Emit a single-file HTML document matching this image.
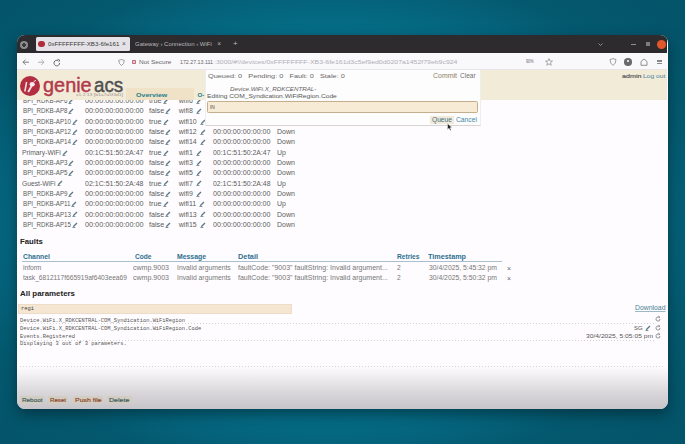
<!DOCTYPE html>
<html><head><meta charset="utf-8">
<style>
*{margin:0;padding:0;box-sizing:border-box}
html,body{width:685px;height:444px;overflow:hidden}
body{position:relative;font-family:"Liberation Sans",sans-serif;
background:radial-gradient(ellipse closest-side at 48% 50%,#06768f 0%,#056c86 88%,#04596f 115%,#04546a 141%);}
.a{position:absolute;white-space:nowrap;line-height:1}
#win{position:absolute;left:17px;top:35px;width:650.6px;height:373.6px;border-radius:8px 8px 8px 8px;overflow:hidden;background:#fefcfe;box-shadow:0 5px 14px rgba(0,25,35,.55)}
#fade{position:absolute;left:0;top:331px;width:651px;height:43px;background:linear-gradient(180deg,rgba(196,194,198,0) 0%,rgba(196,194,198,.3) 30%,rgba(196,194,198,.65) 62%,rgba(194,192,196,.92) 100%)}
</style></head><body>
<div id="win">
<div class="a" style="left:5.5px;top:62.13px;font-size:7px;color:#5c5c5c;transform:scaleX(0.888);transform-origin:0 0;">BPI_RDKB-AP6</div>
<svg class="a" width="6" height="6" viewBox="0 0 6 6" style="left:51.27px;top:63.0px;overflow:visible"><path d="M1.2 4.8 L5 1" stroke="#5d7a84" stroke-width="1.3" fill="none"/><path d="M0.4 5.5 H3.4" stroke="#5d7a84" stroke-width="0.8"/></svg>
<div class="a" style="left:68px;top:62.13px;font-size:7px;color:#5c5c5c;transform:scaleX(1.037);transform-origin:0 0;">00:00:00:00:00:00</div>
<div class="a" style="left:132px;top:62.13px;font-size:7px;color:#5c5c5c;transform:scaleX(1.030);transform-origin:0 0;">true</div>
<svg class="a" width="6" height="6" viewBox="0 0 6 6" style="left:145.62px;top:63.0px;overflow:visible"><path d="M1.2 4.8 L5 1" stroke="#5d7a84" stroke-width="1.3" fill="none"/><path d="M0.4 5.5 H3.4" stroke="#5d7a84" stroke-width="0.8"/></svg>
<div class="a" style="left:161.8px;top:62.13px;font-size:7px;color:#5c5c5c;">wifi6</div>
<svg class="a" width="6" height="6" viewBox="0 0 6 6" style="left:178.6px;top:63.0px;overflow:visible"><path d="M1.2 4.8 L5 1" stroke="#5d7a84" stroke-width="1.3" fill="none"/><path d="M0.4 5.5 H3.4" stroke="#5d7a84" stroke-width="0.8"/></svg>
<div class="a" style="left:196px;top:62.13px;font-size:7px;color:#5c5c5c;transform:scaleX(1.019);transform-origin:0 0;">00:00:00:00:00:00</div>
<div class="a" style="left:260px;top:62.13px;font-size:7px;color:#5c5c5c;">Down</div>
<div class="a" style="left:5.5px;top:72.44px;font-size:7px;color:#5c5c5c;transform:scaleX(0.888);transform-origin:0 0;">BPI_RDKB-AP8</div>
<svg class="a" width="6" height="6" viewBox="0 0 6 6" style="left:51.27px;top:73.31px;overflow:visible"><path d="M1.2 4.8 L5 1" stroke="#5d7a84" stroke-width="1.3" fill="none"/><path d="M0.4 5.5 H3.4" stroke="#5d7a84" stroke-width="0.8"/></svg>
<div class="a" style="left:68px;top:72.44px;font-size:7px;color:#5c5c5c;transform:scaleX(1.037);transform-origin:0 0;">00:00:00:00:00:00</div>
<div class="a" style="left:132px;top:72.44px;font-size:7px;color:#5c5c5c;transform:scaleX(1.030);transform-origin:0 0;">false</div>
<svg class="a" width="6" height="6" viewBox="0 0 6 6" style="left:148.43px;top:73.31px;overflow:visible"><path d="M1.2 4.8 L5 1" stroke="#5d7a84" stroke-width="1.3" fill="none"/><path d="M0.4 5.5 H3.4" stroke="#5d7a84" stroke-width="0.8"/></svg>
<div class="a" style="left:161.8px;top:72.44px;font-size:7px;color:#5c5c5c;">wifi8</div>
<svg class="a" width="6" height="6" viewBox="0 0 6 6" style="left:178.6px;top:73.31px;overflow:visible"><path d="M1.2 4.8 L5 1" stroke="#5d7a84" stroke-width="1.3" fill="none"/><path d="M0.4 5.5 H3.4" stroke="#5d7a84" stroke-width="0.8"/></svg>
<div class="a" style="left:196px;top:72.44px;font-size:7px;color:#5c5c5c;transform:scaleX(1.019);transform-origin:0 0;">00:00:00:00:00:00</div>
<div class="a" style="left:260px;top:72.44px;font-size:7px;color:#5c5c5c;">Down</div>
<div class="a" style="left:5.5px;top:82.75px;font-size:7px;color:#5c5c5c;transform:scaleX(0.888);transform-origin:0 0;">BPI_RDKB-AP10</div>
<svg class="a" width="6" height="6" viewBox="0 0 6 6" style="left:54.72px;top:83.62px;overflow:visible"><path d="M1.2 4.8 L5 1" stroke="#5d7a84" stroke-width="1.3" fill="none"/><path d="M0.4 5.5 H3.4" stroke="#5d7a84" stroke-width="0.8"/></svg>
<div class="a" style="left:68px;top:82.75px;font-size:7px;color:#5c5c5c;transform:scaleX(1.037);transform-origin:0 0;">00:00:00:00:00:00</div>
<div class="a" style="left:132px;top:82.75px;font-size:7px;color:#5c5c5c;transform:scaleX(1.030);transform-origin:0 0;">true</div>
<svg class="a" width="6" height="6" viewBox="0 0 6 6" style="left:145.62px;top:83.62px;overflow:visible"><path d="M1.2 4.8 L5 1" stroke="#5d7a84" stroke-width="1.3" fill="none"/><path d="M0.4 5.5 H3.4" stroke="#5d7a84" stroke-width="0.8"/></svg>
<div class="a" style="left:161.8px;top:82.75px;font-size:7px;color:#5c5c5c;">wifi10</div>
<svg class="a" width="6" height="6" viewBox="0 0 6 6" style="left:182.5px;top:83.62px;overflow:visible"><path d="M1.2 4.8 L5 1" stroke="#5d7a84" stroke-width="1.3" fill="none"/><path d="M0.4 5.5 H3.4" stroke="#5d7a84" stroke-width="0.8"/></svg>
<div class="a" style="left:196px;top:82.75px;font-size:7px;color:#5c5c5c;transform:scaleX(1.019);transform-origin:0 0;">00:00:00:00:00:00</div>
<div class="a" style="left:260px;top:82.75px;font-size:7px;color:#5c5c5c;">Down</div>
<div class="a" style="left:5.5px;top:93.06px;font-size:7px;color:#5c5c5c;transform:scaleX(0.888);transform-origin:0 0;">BPI_RDKB-AP12</div>
<svg class="a" width="6" height="6" viewBox="0 0 6 6" style="left:54.72px;top:93.93px;overflow:visible"><path d="M1.2 4.8 L5 1" stroke="#5d7a84" stroke-width="1.3" fill="none"/><path d="M0.4 5.5 H3.4" stroke="#5d7a84" stroke-width="0.8"/></svg>
<div class="a" style="left:68px;top:93.06px;font-size:7px;color:#5c5c5c;transform:scaleX(1.037);transform-origin:0 0;">00:00:00:00:00:00</div>
<div class="a" style="left:132px;top:93.06px;font-size:7px;color:#5c5c5c;transform:scaleX(1.030);transform-origin:0 0;">false</div>
<svg class="a" width="6" height="6" viewBox="0 0 6 6" style="left:148.43px;top:93.93px;overflow:visible"><path d="M1.2 4.8 L5 1" stroke="#5d7a84" stroke-width="1.3" fill="none"/><path d="M0.4 5.5 H3.4" stroke="#5d7a84" stroke-width="0.8"/></svg>
<div class="a" style="left:161.8px;top:93.06px;font-size:7px;color:#5c5c5c;">wifi12</div>
<svg class="a" width="6" height="6" viewBox="0 0 6 6" style="left:182.5px;top:93.93px;overflow:visible"><path d="M1.2 4.8 L5 1" stroke="#5d7a84" stroke-width="1.3" fill="none"/><path d="M0.4 5.5 H3.4" stroke="#5d7a84" stroke-width="0.8"/></svg>
<div class="a" style="left:196px;top:93.06px;font-size:7px;color:#5c5c5c;transform:scaleX(1.019);transform-origin:0 0;">00:00:00:00:00:00</div>
<div class="a" style="left:260px;top:93.06px;font-size:7px;color:#5c5c5c;">Down</div>
<div class="a" style="left:5.5px;top:103.37px;font-size:7px;color:#5c5c5c;transform:scaleX(0.888);transform-origin:0 0;">BPI_RDKB-AP14</div>
<svg class="a" width="6" height="6" viewBox="0 0 6 6" style="left:54.72px;top:104.24px;overflow:visible"><path d="M1.2 4.8 L5 1" stroke="#5d7a84" stroke-width="1.3" fill="none"/><path d="M0.4 5.5 H3.4" stroke="#5d7a84" stroke-width="0.8"/></svg>
<div class="a" style="left:68px;top:103.37px;font-size:7px;color:#5c5c5c;transform:scaleX(1.037);transform-origin:0 0;">00:00:00:00:00:00</div>
<div class="a" style="left:132px;top:103.37px;font-size:7px;color:#5c5c5c;transform:scaleX(1.030);transform-origin:0 0;">false</div>
<svg class="a" width="6" height="6" viewBox="0 0 6 6" style="left:148.43px;top:104.24px;overflow:visible"><path d="M1.2 4.8 L5 1" stroke="#5d7a84" stroke-width="1.3" fill="none"/><path d="M0.4 5.5 H3.4" stroke="#5d7a84" stroke-width="0.8"/></svg>
<div class="a" style="left:161.8px;top:103.37px;font-size:7px;color:#5c5c5c;">wifi14</div>
<svg class="a" width="6" height="6" viewBox="0 0 6 6" style="left:182.5px;top:104.24px;overflow:visible"><path d="M1.2 4.8 L5 1" stroke="#5d7a84" stroke-width="1.3" fill="none"/><path d="M0.4 5.5 H3.4" stroke="#5d7a84" stroke-width="0.8"/></svg>
<div class="a" style="left:196px;top:103.37px;font-size:7px;color:#5c5c5c;transform:scaleX(1.019);transform-origin:0 0;">00:00:00:00:00:00</div>
<div class="a" style="left:260px;top:103.37px;font-size:7px;color:#5c5c5c;">Down</div>
<div class="a" style="left:5.0px;top:113.68px;font-size:7px;color:#5c5c5c;transform:scaleX(0.960);transform-origin:0 0;">Primary-WiFi</div>
<svg class="a" width="6" height="6" viewBox="0 0 6 6" style="left:45.02px;top:114.55px;overflow:visible"><path d="M1.2 4.8 L5 1" stroke="#5d7a84" stroke-width="1.3" fill="none"/><path d="M0.4 5.5 H3.4" stroke="#5d7a84" stroke-width="0.8"/></svg>
<div class="a" style="left:68px;top:113.68px;font-size:7px;color:#5c5c5c;transform:scaleX(1.002);transform-origin:0 0;">00:1C:51:50:2A:47</div>
<div class="a" style="left:132px;top:113.68px;font-size:7px;color:#5c5c5c;transform:scaleX(1.030);transform-origin:0 0;">true</div>
<svg class="a" width="6" height="6" viewBox="0 0 6 6" style="left:145.62px;top:114.55px;overflow:visible"><path d="M1.2 4.8 L5 1" stroke="#5d7a84" stroke-width="1.3" fill="none"/><path d="M0.4 5.5 H3.4" stroke="#5d7a84" stroke-width="0.8"/></svg>
<div class="a" style="left:161.8px;top:113.68px;font-size:7px;color:#5c5c5c;">wifi1</div>
<svg class="a" width="6" height="6" viewBox="0 0 6 6" style="left:178.6px;top:114.55px;overflow:visible"><path d="M1.2 4.8 L5 1" stroke="#5d7a84" stroke-width="1.3" fill="none"/><path d="M0.4 5.5 H3.4" stroke="#5d7a84" stroke-width="0.8"/></svg>
<div class="a" style="left:196px;top:113.68px;font-size:7px;color:#5c5c5c;transform:scaleX(0.985);transform-origin:0 0;">00:1C:51:50:2A:47</div>
<div class="a" style="left:260px;top:113.68px;font-size:7px;color:#5c5c5c;">Up</div>
<div class="a" style="left:5.5px;top:123.99px;font-size:7px;color:#5c5c5c;transform:scaleX(0.888);transform-origin:0 0;">BPI_RDKB-AP3</div>
<svg class="a" width="6" height="6" viewBox="0 0 6 6" style="left:51.27px;top:124.86px;overflow:visible"><path d="M1.2 4.8 L5 1" stroke="#5d7a84" stroke-width="1.3" fill="none"/><path d="M0.4 5.5 H3.4" stroke="#5d7a84" stroke-width="0.8"/></svg>
<div class="a" style="left:68px;top:123.99px;font-size:7px;color:#5c5c5c;transform:scaleX(1.037);transform-origin:0 0;">00:00:00:00:00:00</div>
<div class="a" style="left:132px;top:123.99px;font-size:7px;color:#5c5c5c;transform:scaleX(1.030);transform-origin:0 0;">false</div>
<svg class="a" width="6" height="6" viewBox="0 0 6 6" style="left:148.43px;top:124.86px;overflow:visible"><path d="M1.2 4.8 L5 1" stroke="#5d7a84" stroke-width="1.3" fill="none"/><path d="M0.4 5.5 H3.4" stroke="#5d7a84" stroke-width="0.8"/></svg>
<div class="a" style="left:161.8px;top:123.99px;font-size:7px;color:#5c5c5c;">wifi3</div>
<svg class="a" width="6" height="6" viewBox="0 0 6 6" style="left:178.6px;top:124.86px;overflow:visible"><path d="M1.2 4.8 L5 1" stroke="#5d7a84" stroke-width="1.3" fill="none"/><path d="M0.4 5.5 H3.4" stroke="#5d7a84" stroke-width="0.8"/></svg>
<div class="a" style="left:196px;top:123.99px;font-size:7px;color:#5c5c5c;transform:scaleX(1.019);transform-origin:0 0;">00:00:00:00:00:00</div>
<div class="a" style="left:260px;top:123.99px;font-size:7px;color:#5c5c5c;">Down</div>
<div class="a" style="left:5.5px;top:134.3px;font-size:7px;color:#5c5c5c;transform:scaleX(0.888);transform-origin:0 0;">BPI_RDKB-AP5</div>
<svg class="a" width="6" height="6" viewBox="0 0 6 6" style="left:51.27px;top:135.17px;overflow:visible"><path d="M1.2 4.8 L5 1" stroke="#5d7a84" stroke-width="1.3" fill="none"/><path d="M0.4 5.5 H3.4" stroke="#5d7a84" stroke-width="0.8"/></svg>
<div class="a" style="left:68px;top:134.3px;font-size:7px;color:#5c5c5c;transform:scaleX(1.037);transform-origin:0 0;">00:00:00:00:00:00</div>
<div class="a" style="left:132px;top:134.3px;font-size:7px;color:#5c5c5c;transform:scaleX(1.030);transform-origin:0 0;">false</div>
<svg class="a" width="6" height="6" viewBox="0 0 6 6" style="left:148.43px;top:135.17px;overflow:visible"><path d="M1.2 4.8 L5 1" stroke="#5d7a84" stroke-width="1.3" fill="none"/><path d="M0.4 5.5 H3.4" stroke="#5d7a84" stroke-width="0.8"/></svg>
<div class="a" style="left:161.8px;top:134.3px;font-size:7px;color:#5c5c5c;">wifi5</div>
<svg class="a" width="6" height="6" viewBox="0 0 6 6" style="left:178.6px;top:135.17px;overflow:visible"><path d="M1.2 4.8 L5 1" stroke="#5d7a84" stroke-width="1.3" fill="none"/><path d="M0.4 5.5 H3.4" stroke="#5d7a84" stroke-width="0.8"/></svg>
<div class="a" style="left:196px;top:134.3px;font-size:7px;color:#5c5c5c;transform:scaleX(1.019);transform-origin:0 0;">00:00:00:00:00:00</div>
<div class="a" style="left:260px;top:134.3px;font-size:7px;color:#5c5c5c;">Down</div>
<div class="a" style="left:5.0px;top:144.61px;font-size:7px;color:#5c5c5c;transform:scaleX(0.960);transform-origin:0 0;">Guest-WiFi</div>
<svg class="a" width="6" height="6" viewBox="0 0 6 6" style="left:39.8px;top:145.48px;overflow:visible"><path d="M1.2 4.8 L5 1" stroke="#5d7a84" stroke-width="1.3" fill="none"/><path d="M0.4 5.5 H3.4" stroke="#5d7a84" stroke-width="0.8"/></svg>
<div class="a" style="left:68px;top:144.61px;font-size:7px;color:#5c5c5c;transform:scaleX(1.002);transform-origin:0 0;">02:1C:51:50:2A:48</div>
<div class="a" style="left:132px;top:144.61px;font-size:7px;color:#5c5c5c;transform:scaleX(1.030);transform-origin:0 0;">true</div>
<svg class="a" width="6" height="6" viewBox="0 0 6 6" style="left:145.62px;top:145.48px;overflow:visible"><path d="M1.2 4.8 L5 1" stroke="#5d7a84" stroke-width="1.3" fill="none"/><path d="M0.4 5.5 H3.4" stroke="#5d7a84" stroke-width="0.8"/></svg>
<div class="a" style="left:161.8px;top:144.61px;font-size:7px;color:#5c5c5c;">wifi7</div>
<svg class="a" width="6" height="6" viewBox="0 0 6 6" style="left:178.6px;top:145.48px;overflow:visible"><path d="M1.2 4.8 L5 1" stroke="#5d7a84" stroke-width="1.3" fill="none"/><path d="M0.4 5.5 H3.4" stroke="#5d7a84" stroke-width="0.8"/></svg>
<div class="a" style="left:196px;top:144.61px;font-size:7px;color:#5c5c5c;transform:scaleX(0.985);transform-origin:0 0;">02:1C:51:50:2A:48</div>
<div class="a" style="left:260px;top:144.61px;font-size:7px;color:#5c5c5c;">Up</div>
<div class="a" style="left:5.5px;top:154.92px;font-size:7px;color:#5c5c5c;transform:scaleX(0.888);transform-origin:0 0;">BPI_RDKB-AP9</div>
<svg class="a" width="6" height="6" viewBox="0 0 6 6" style="left:51.27px;top:155.79px;overflow:visible"><path d="M1.2 4.8 L5 1" stroke="#5d7a84" stroke-width="1.3" fill="none"/><path d="M0.4 5.5 H3.4" stroke="#5d7a84" stroke-width="0.8"/></svg>
<div class="a" style="left:68px;top:154.92px;font-size:7px;color:#5c5c5c;transform:scaleX(1.037);transform-origin:0 0;">00:00:00:00:00:00</div>
<div class="a" style="left:132px;top:154.92px;font-size:7px;color:#5c5c5c;transform:scaleX(1.030);transform-origin:0 0;">false</div>
<svg class="a" width="6" height="6" viewBox="0 0 6 6" style="left:148.43px;top:155.79px;overflow:visible"><path d="M1.2 4.8 L5 1" stroke="#5d7a84" stroke-width="1.3" fill="none"/><path d="M0.4 5.5 H3.4" stroke="#5d7a84" stroke-width="0.8"/></svg>
<div class="a" style="left:161.8px;top:154.92px;font-size:7px;color:#5c5c5c;">wifi9</div>
<svg class="a" width="6" height="6" viewBox="0 0 6 6" style="left:178.6px;top:155.79px;overflow:visible"><path d="M1.2 4.8 L5 1" stroke="#5d7a84" stroke-width="1.3" fill="none"/><path d="M0.4 5.5 H3.4" stroke="#5d7a84" stroke-width="0.8"/></svg>
<div class="a" style="left:196px;top:154.92px;font-size:7px;color:#5c5c5c;transform:scaleX(1.019);transform-origin:0 0;">00:00:00:00:00:00</div>
<div class="a" style="left:260px;top:154.92px;font-size:7px;color:#5c5c5c;">Down</div>
<div class="a" style="left:5.5px;top:165.23px;font-size:7px;color:#5c5c5c;transform:scaleX(0.888);transform-origin:0 0;">BPI_RDKB-AP11</div>
<svg class="a" width="6" height="6" viewBox="0 0 6 6" style="left:54.26px;top:166.1px;overflow:visible"><path d="M1.2 4.8 L5 1" stroke="#5d7a84" stroke-width="1.3" fill="none"/><path d="M0.4 5.5 H3.4" stroke="#5d7a84" stroke-width="0.8"/></svg>
<div class="a" style="left:68px;top:165.23px;font-size:7px;color:#5c5c5c;transform:scaleX(1.037);transform-origin:0 0;">00:00:00:00:00:00</div>
<div class="a" style="left:132px;top:165.23px;font-size:7px;color:#5c5c5c;transform:scaleX(1.030);transform-origin:0 0;">true</div>
<svg class="a" width="6" height="6" viewBox="0 0 6 6" style="left:145.62px;top:166.1px;overflow:visible"><path d="M1.2 4.8 L5 1" stroke="#5d7a84" stroke-width="1.3" fill="none"/><path d="M0.4 5.5 H3.4" stroke="#5d7a84" stroke-width="0.8"/></svg>
<div class="a" style="left:161.8px;top:165.23px;font-size:7px;color:#5c5c5c;">wifi11</div>
<svg class="a" width="6" height="6" viewBox="0 0 6 6" style="left:181.98px;top:166.1px;overflow:visible"><path d="M1.2 4.8 L5 1" stroke="#5d7a84" stroke-width="1.3" fill="none"/><path d="M0.4 5.5 H3.4" stroke="#5d7a84" stroke-width="0.8"/></svg>
<div class="a" style="left:196px;top:165.23px;font-size:7px;color:#5c5c5c;transform:scaleX(1.019);transform-origin:0 0;">00:00:00:00:00:00</div>
<div class="a" style="left:260px;top:165.23px;font-size:7px;color:#5c5c5c;">Up</div>
<div class="a" style="left:5.5px;top:175.54px;font-size:7px;color:#5c5c5c;transform:scaleX(0.888);transform-origin:0 0;">BPI_RDKB-AP13</div>
<svg class="a" width="6" height="6" viewBox="0 0 6 6" style="left:54.72px;top:176.41px;overflow:visible"><path d="M1.2 4.8 L5 1" stroke="#5d7a84" stroke-width="1.3" fill="none"/><path d="M0.4 5.5 H3.4" stroke="#5d7a84" stroke-width="0.8"/></svg>
<div class="a" style="left:68px;top:175.54px;font-size:7px;color:#5c5c5c;transform:scaleX(1.037);transform-origin:0 0;">00:00:00:00:00:00</div>
<div class="a" style="left:132px;top:175.54px;font-size:7px;color:#5c5c5c;transform:scaleX(1.030);transform-origin:0 0;">false</div>
<svg class="a" width="6" height="6" viewBox="0 0 6 6" style="left:148.43px;top:176.41px;overflow:visible"><path d="M1.2 4.8 L5 1" stroke="#5d7a84" stroke-width="1.3" fill="none"/><path d="M0.4 5.5 H3.4" stroke="#5d7a84" stroke-width="0.8"/></svg>
<div class="a" style="left:161.8px;top:175.54px;font-size:7px;color:#5c5c5c;">wifi13</div>
<svg class="a" width="6" height="6" viewBox="0 0 6 6" style="left:182.5px;top:176.41px;overflow:visible"><path d="M1.2 4.8 L5 1" stroke="#5d7a84" stroke-width="1.3" fill="none"/><path d="M0.4 5.5 H3.4" stroke="#5d7a84" stroke-width="0.8"/></svg>
<div class="a" style="left:196px;top:175.54px;font-size:7px;color:#5c5c5c;transform:scaleX(1.019);transform-origin:0 0;">00:00:00:00:00:00</div>
<div class="a" style="left:260px;top:175.54px;font-size:7px;color:#5c5c5c;">Down</div>
<div class="a" style="left:5.5px;top:185.85px;font-size:7px;color:#5c5c5c;transform:scaleX(0.888);transform-origin:0 0;">BPI_RDKB-AP15</div>
<svg class="a" width="6" height="6" viewBox="0 0 6 6" style="left:54.72px;top:186.72px;overflow:visible"><path d="M1.2 4.8 L5 1" stroke="#5d7a84" stroke-width="1.3" fill="none"/><path d="M0.4 5.5 H3.4" stroke="#5d7a84" stroke-width="0.8"/></svg>
<div class="a" style="left:68px;top:185.85px;font-size:7px;color:#5c5c5c;transform:scaleX(1.037);transform-origin:0 0;">00:00:00:00:00:00</div>
<div class="a" style="left:132px;top:185.85px;font-size:7px;color:#5c5c5c;transform:scaleX(1.030);transform-origin:0 0;">false</div>
<svg class="a" width="6" height="6" viewBox="0 0 6 6" style="left:148.43px;top:186.72px;overflow:visible"><path d="M1.2 4.8 L5 1" stroke="#5d7a84" stroke-width="1.3" fill="none"/><path d="M0.4 5.5 H3.4" stroke="#5d7a84" stroke-width="0.8"/></svg>
<div class="a" style="left:161.8px;top:185.85px;font-size:7px;color:#5c5c5c;">wifi15</div>
<svg class="a" width="6" height="6" viewBox="0 0 6 6" style="left:182.5px;top:186.72px;overflow:visible"><path d="M1.2 4.8 L5 1" stroke="#5d7a84" stroke-width="1.3" fill="none"/><path d="M0.4 5.5 H3.4" stroke="#5d7a84" stroke-width="0.8"/></svg>
<div class="a" style="left:196px;top:185.85px;font-size:7px;color:#5c5c5c;transform:scaleX(1.019);transform-origin:0 0;">00:00:00:00:00:00</div>
<div class="a" style="left:260px;top:185.85px;font-size:7px;color:#5c5c5c;">Down</div>
<div class="a" style="left:2.5px;top:202.54px;font-size:8px;color:#222;font-weight:bold;transform:scaleX(0.968);transform-origin:0 0;">Faults</div>
<div class="a" style="left:6px;top:219.06px;font-size:6.3px;color:#2e6f8e;font-weight:bold;transform:scaleX(1.086);transform-origin:0 0;">Channel</div>
<div class="a" style="left:117.5px;top:219.06px;font-size:6.3px;color:#2e6f8e;font-weight:bold;transform:scaleX(1.048);transform-origin:0 0;">Code</div>
<div class="a" style="left:159.5px;top:219.06px;font-size:6.3px;color:#2e6f8e;font-weight:bold;transform:scaleX(1.090);transform-origin:0 0;">Message</div>
<div class="a" style="left:221px;top:219.06px;font-size:6.3px;color:#2e6f8e;font-weight:bold;transform:scaleX(1.166);transform-origin:0 0;">Detail</div>
<div class="a" style="left:380.2px;top:219.06px;font-size:6.3px;color:#2e6f8e;font-weight:bold;transform:scaleX(1.053);transform-origin:0 0;">Retries</div>
<div class="a" style="left:410.8px;top:219.06px;font-size:6.3px;color:#2e6f8e;font-weight:bold;transform:scaleX(1.147);transform-origin:0 0;">Timestamp</div>
<div class="a" style="left:5px;top:226.3px;width:480px;height:1.0px;background:#a8c0ce;"></div>
<div class="a" style="left:6px;top:229.82px;font-size:6.6px;color:#777;">inform</div>
<div class="a" style="left:116.3px;top:229.82px;font-size:6.6px;color:#777;transform:scaleX(1.067);transform-origin:0 0;">cwmp.9003</div>
<div class="a" style="left:159.5px;top:229.82px;font-size:6.6px;color:#777;transform:scaleX(1.033);transform-origin:0 0;">Invalid arguments</div>
<div class="a" style="left:221px;top:229.82px;font-size:6.6px;color:#777;transform:scaleX(1.065);transform-origin:0 0;">faultCode: "9003" faultString: Invalid argument...</div>
<div class="a" style="left:380px;top:229.82px;font-size:6.6px;color:#777;">2</div>
<div class="a" style="left:411.6px;top:229.82px;font-size:6.6px;color:#777;transform:scaleX(1.030);transform-origin:0 0;">30/4/2025, 5:45:32 pm</div>
<div class="a" style="left:490px;top:229.63px;font-size:7px;color:#666;">×</div>
<div class="a" style="left:6px;top:240.02px;font-size:6.6px;color:#777;transform:scaleX(1.006);transform-origin:0 0;">task_6812117f665919af6403eea69</div>
<div class="a" style="left:116.3px;top:240.02px;font-size:6.6px;color:#777;transform:scaleX(1.067);transform-origin:0 0;">cwmp.9003</div>
<div class="a" style="left:159.5px;top:240.02px;font-size:6.6px;color:#777;transform:scaleX(1.033);transform-origin:0 0;">Invalid arguments</div>
<div class="a" style="left:221px;top:240.02px;font-size:6.6px;color:#777;transform:scaleX(1.065);transform-origin:0 0;">faultCode: "9003" faultString: Invalid argument...</div>
<div class="a" style="left:380px;top:240.02px;font-size:6.6px;color:#777;">2</div>
<div class="a" style="left:411.6px;top:240.02px;font-size:6.6px;color:#777;transform:scaleX(1.030);transform-origin:0 0;">30/4/2025, 5:50:32 pm</div>
<div class="a" style="left:490px;top:239.83px;font-size:7px;color:#666;">×</div>
<div class="a" style="left:2.5px;top:254.54px;font-size:8px;color:#222;font-weight:bold;transform:scaleX(0.990);transform-origin:0 0;">All parameters</div>
<div class="a" style="left:1px;top:268.8px;width:274px;height:10.0px;background:#f5e6d2;border:0.5px solid #ecdcc8"></div>
<div class="a" style="left:4px;top:271.84px;font-size:5.4px;color:#444;font-family:'Liberation Mono',monospace;">regi</div>
<div class="a" style="left:617.8px;top:269.52px;font-size:6.6px;color:#4a7f96;transform:scaleX(1.039);transform-origin:0 0;text-decoration:underline;text-decoration-color:#9ab8c8;">Download</div>
<div class="a" style="left:3px;top:284.04px;font-size:5.4px;color:#555;font-family:'Liberation Mono',monospace;">Device.WiFi.X_RDKCENTRAL-COM_Syndication.WiFiRegion</div>
<div class="a" style="left:3px;top:292.24px;font-size:5.4px;color:#555;font-family:'Liberation Mono',monospace;">Device.WiFi.X_RDKCENTRAL-COM_Syndication.WiFiRegion.Code</div>
<div class="a" style="left:3px;top:300.14px;font-size:5.4px;color:#555;font-family:'Liberation Mono',monospace;">Events.Registered</div>
<div class="a" style="left:3px;top:307.14px;font-size:5.4px;color:#555;font-family:'Liberation Mono',monospace;">Displaying 3 out of 3 parameters.</div>
<div class="a" style="left:3px;top:287.5px;width:634px;height:1.0px;background:repeating-linear-gradient(90deg,#d2d2d2 0 1px,transparent 1px 3px);"></div>
<div class="a" style="left:3px;top:305px;width:634px;height:1px;background:repeating-linear-gradient(90deg,#d2d2d2 0 1px,transparent 1px 3px);"></div>
<svg class="a" width="6" height="6" viewBox="0 0 6 6" style="left:637.5px;top:281.2px;overflow:visible"><path d="M5 3 A2 2 0 1 1 3.8 1.2" stroke="#777" stroke-width="0.8" fill="none"/><path d="M3.2 0.2 L5 1 L3.8 2.4" stroke="#777" stroke-width="0.7" fill="none"/></svg>
<div class="a" style="left:617px;top:289.71px;font-size:6px;color:#555;">SG</div>
<svg class="a" width="6" height="6" viewBox="0 0 6 6" style="left:628px;top:290.1px;overflow:visible"><path d="M1.2 4.8 L5 1" stroke="#5d7a84" stroke-width="1.3" fill="none"/><path d="M0.4 5.5 H3.4" stroke="#5d7a84" stroke-width="0.8"/></svg>
<svg class="a" width="6" height="6" viewBox="0 0 6 6" style="left:637.5px;top:289.6px;overflow:visible"><path d="M5 3 A2 2 0 1 1 3.8 1.2" stroke="#777" stroke-width="0.8" fill="none"/><path d="M3.2 0.2 L5 1 L3.8 2.4" stroke="#777" stroke-width="0.7" fill="none"/></svg>
<div class="a" style="left:568.5px;top:298.41px;font-size:6px;color:#555;transform:scaleX(1.116);transform-origin:0 0;">30/4/2025, 5:05:05 pm</div>
<svg class="a" width="6" height="6" viewBox="0 0 6 6" style="left:637.5px;top:298.3px;overflow:visible"><path d="M5 3 A2 2 0 1 1 3.8 1.2" stroke="#777" stroke-width="0.8" fill="none"/><path d="M3.2 0.2 L5 1 L3.8 2.4" stroke="#777" stroke-width="0.7" fill="none"/></svg>
<div class="a" style="left:0px;top:34.9px;width:650px;height:30.3px;background:#f2ebd8;"></div>
<svg class="a" width="20" height="20" viewBox="0 0 20 20" style="left:2.9px;top:40.8px;overflow:visible"><circle cx="10" cy="10" r="10" fill="#b32e40"/><path d="M4.8 15.5 L6.6 6" stroke="#f2e4e4" stroke-width="1.5" fill="none"/><path d="M8.2 16 L12.6 8.2" stroke="#f2e4e4" stroke-width="1.8" fill="none"/><ellipse cx="12.2" cy="8.2" rx="2.6" ry="2.2" fill="#f6ecec"/><path d="M13.6 5.6 L16 4.4" stroke="#f2e4e4" stroke-width="1" fill="none"/></svg>
<div class="a" style="left:26.2px;top:40.16px;font-size:20px;color:#b23a4c;transform:scaleX(0.995);transform-origin:0 0;-webkit-text-stroke:0.45px #b23a4c;">genie</div>
<div class="a" style="left:76.5px;top:40.16px;font-size:20px;color:#505050;transform:scaleX(0.938);transform-origin:0 0;-webkit-text-stroke:0.45px #505050;">acs</div>
<div class="a" style="left:59.4px;top:59.06px;font-size:3.6px;color:#a09090;transform:scaleX(1.389);transform-origin:0 0;">v1.2.13 [b1a7a5f3d1]</div>
<div class="a" style="left:109px;top:53.4px;width:67.6px;height:11.8px;background:#efe2c6;"></div>
<div class="a" style="left:118.8px;top:57.01px;font-size:6.2px;color:#1f7e8c;font-weight:bold;transform:scaleX(1.139);transform-origin:0 0;">Overview</div>
<div class="a" style="left:180.5px;top:57.01px;font-size:6.2px;color:#1f7e8c;font-weight:bold;">O-</div>
<div class="a" style="left:605px;top:38.9px;font-size:5.8px;color:#505050;transform:scaleX(1.234);transform-origin:0 0;-webkit-text-stroke:0.15px #505050;">admin</div>
<div class="a" style="left:626px;top:38.9px;font-size:5.8px;color:#4a82a0;transform:scaleX(1.158);transform-origin:0 0;">Log out</div>
<div class="a" style="left:187.5px;top:34.9px;width:276.0px;height:56.1px;background:#fefdfe;border-bottom:0.8px solid #d8d4d4;border-left:0.5px solid #eee;border-right:0.5px solid #eee"></div>
<div class="a" style="left:190.5px;top:38.96px;font-size:5.9px;color:#666;transform:scaleX(1.243);transform-origin:0 0;">Queued: 0   Pending: 0   Fault: 0   Stale: 0</div>
<div class="a" style="left:415.5px;top:38.42px;font-size:6.4px;color:#8d8068;transform:scaleX(1.089);transform-origin:0 0;">Commit</div>
<div class="a" style="left:443.2px;top:38.42px;font-size:6.4px;color:#6f6f6f;transform:scaleX(1.020);transform-origin:0 0;">Clear</div>
<div class="a" style="left:213px;top:51.26px;font-size:6.1px;color:#606060;font-style:italic;transform:scaleX(1.017);transform-origin:0 0;">Device.WiFi.X_RDKCENTRAL-</div>
<div class="a" style="left:190px;top:57.86px;font-size:6.1px;color:#555;transform:scaleX(1.092);transform-origin:0 0;">Editing COM_Syndication.WiFiRegion.Code</div>
<div class="a" style="left:189.8px;top:65.6px;width:271.6px;height:12.2px;background:#f7ebd6;border:1.2px solid #c4ae8e;border-radius:1.5px"></div>
<div class="a" style="left:193.3px;top:68.91px;font-size:6px;color:#444;transform:scaleX(0.800);transform-origin:0 0;">IN</div>
<div class="a" style="left:412.5px;top:81.2px;width:24.1px;height:7.4px;background:#f1eadb;"></div>
<div class="a" style="left:415px;top:82.12px;font-size:6.4px;color:#3f6f80;transform:scaleX(1.041);transform-origin:0 0;">Queue</div>
<div class="a" style="left:439px;top:82.12px;font-size:6.4px;color:#3f86a6;transform:scaleX(1.054);transform-origin:0 0;">Cancel</div>
<svg class="a" width="6" height="8" viewBox="0 0 6 8" style="left:430px;top:87.8px;overflow:visible"><path d="M0.5 0.5 L0.5 6.5 L2 5.2 L3.2 7.6 L4.2 7.1 L3 4.8 L5 4.6 Z" fill="#222" stroke="#eee" stroke-width="0.5"/></svg>
<div id="fade"></div>
<div style="position:absolute;left:3px;top:331px;width:644px;height:1px;background:repeating-linear-gradient(90deg,#d4d4d4 0 1px,transparent 1px 3px)"></div>
<div class="a" style="left:2.5px;top:360.7px;width:24.5px;height:8.8px;background:#d3ccc0;border-radius:1px"></div>
<div class="a" style="left:4.5px;top:362.11px;font-size:6.2px;color:#385a5e;transform:scaleX(1.025);transform-origin:0 0;-webkit-text-stroke:0.15px #385a5e;">Reboot</div>
<div class="a" style="left:31.3px;top:360.7px;width:20.1px;height:8.8px;background:#d3ccc0;border-radius:1px"></div>
<div class="a" style="left:33.3px;top:362.11px;font-size:6.2px;color:#8a3f26;transform:scaleX(0.994);transform-origin:0 0;-webkit-text-stroke:0.15px #8a3f26;">Reset</div>
<div class="a" style="left:55.8px;top:360.7px;width:30.7px;height:8.8px;background:#d3ccc0;border-radius:1px"></div>
<div class="a" style="left:57.8px;top:362.11px;font-size:6.2px;color:#8a3f26;transform:scaleX(1.123);transform-origin:0 0;-webkit-text-stroke:0.15px #8a3f26;">Push file</div>
<div class="a" style="left:90px;top:360.7px;width:24.5px;height:8.8px;background:#d3ccc0;border-radius:1px"></div>
<div class="a" style="left:92px;top:362.11px;font-size:6.2px;color:#385a5e;transform:scaleX(1.144);transform-origin:0 0;-webkit-text-stroke:0.15px #385a5e;">Delete</div>
<div class="a" style="left:0px;top:0px;width:650px;height:18.2px;background:#2e2b2e;"></div>
<div class="a" style="left:19.1px;top:2px;width:94.3px;height:14.3px;background:#e4e2e6;border-radius:1.5px"></div>
<div class="a" style="left:3px;top:5.6px;width:8px;height:8px;border-radius:50%;background:radial-gradient(circle,#3a3a3a 0 1.6px,#8c8c8c 1.8px)"></div>
<div class="a" style="left:21.2px;top:5.8px;width:6.5px;height:6.5px;border-radius:50%;background:#b02c38"></div>
<div class="a" style="left:30.7px;top:6.31px;font-size:6.2px;color:#383838;transform:scaleX(0.998);transform-origin:0 0;">0xFFFFFFFF-XB3-6fe161</div>
<div class="a" style="left:105px;top:6.17px;font-size:6.5px;color:#444;">×</div>
<div class="a" style="left:118px;top:6.31px;font-size:6.2px;color:#b9b6b9;transform:scaleX(0.972);transform-origin:0 0;">Gateway › Connection › WiFi</div>
<div class="a" style="left:200.3px;top:6.17px;font-size:6.5px;color:#bbb;">×</div>
<div class="a" style="left:216px;top:5.34px;font-size:8px;color:#bbb;">+</div>
<svg class="a" width="5" height="3" viewBox="0 0 5 3" style="left:580.5px;top:7.5px;overflow:visible"><path d="M0.5 0.5 L2.5 2.5 L4.5 0.5" stroke="#9a9a9a" stroke-width="0.9" fill="none"/></svg>
<div class="a" style="left:614px;top:9.2px;width:4.5px;height:0.9px;background:#8f8f8f;"></div>
<div class="a" style="left:628.5px;top:6.8px;width:4.0px;height:4.0px;background:#7d7d7d;border-radius:0.5px"></div>
<div class="a" style="left:640px;top:4.6px;width:9px;height:9px;border-radius:50%;background:#e2572c"></div>
<div class="a" style="left:0px;top:18.2px;width:650px;height:16.6px;background:#f9f8fa;"></div>
<div class="a" style="left:0px;top:34.3px;width:650px;height:0.6px;background:#e6e4e6;"></div>
<svg class="a" width="8" height="7" viewBox="0 0 8 7" style="left:5px;top:24px;overflow:visible"><path d="M7 3.2 H1 M3.6 0.6 L1 3.2 L3.6 5.8" stroke="#707070" stroke-width="0.9" fill="none"/></svg>
<svg class="a" width="8" height="7" viewBox="0 0 8 7" style="left:19.8px;top:24px;overflow:visible"><path d="M1 3.2 H7 M4.4 0.6 L7 3.2 L4.4 5.8" stroke="#a8a8a8" stroke-width="0.9" fill="none"/></svg>
<svg class="a" width="8" height="8" viewBox="0 0 8 8" style="left:35.5px;top:23.7px;overflow:visible"><path d="M6.6 4 A2.8 2.8 0 1 1 5.2 1.6" stroke="#5a5a5a" stroke-width="0.9" fill="none"/><path d="M4.6 0.2 L6.8 1.2 L5.6 3.2" stroke="#5a5a5a" stroke-width="0.8" fill="none"/></svg>
<svg class="a" width="7" height="7" viewBox="0 0 7 7" style="left:101px;top:23.6px;overflow:visible"><path d="M3.5 0.5 L6.3 1.4 Q6.2 5 3.5 6.6 Q0.8 5 0.7 1.4 Z" stroke="#888" stroke-width="0.8" fill="none"/></svg>
<div class="a" style="left:114.5px;top:25.2px;width:4.0px;height:4.2px;background:#e7c9cf;border:0.8px solid #c07080;border-radius:0.8px"></div>
<div class="a" style="left:122px;top:23.71px;font-size:6.2px;color:#666;transform:scaleX(1.048);transform-origin:0 0;">Not Secure</div>
<div class="a" style="left:162.7px;top:23.71px;font-size:6.2px;color:#666;transform:scaleX(0.852);transform-origin:0 0;">172.27.13.111</div>
<div class="a" style="left:196.5px;top:23.71px;font-size:6.2px;color:#b0b0b8;transform:scaleX(1.120);transform-origin:0 0;">:3000/#!/devices/0xFFFFFFFF-XB3-6fe161d3c5ef9ed0d0207a1452f79eb9c924</div>
<div class="a" style="left:509px;top:24.2px;font-size:5.4px;color:#666;transform:scaleX(0.694);transform-origin:0 0;">90%</div>
<svg class="a" width="8" height="8" viewBox="0 0 8 8" style="left:527.5px;top:22.7px;overflow:visible"><path d="M4 0.6 L5 3 L7.5 3.1 L5.5 4.7 L6.2 7.3 L4 5.8 L1.8 7.3 L2.5 4.7 L0.5 3.1 L3 3 Z" stroke="#888" stroke-width="0.7" fill="none"/></svg>
<svg class="a" width="8" height="8" viewBox="0 0 8 8" style="left:592px;top:23px;overflow:visible"><path d="M4 0.6 L7 1.6 Q7 5.6 4 7.4 Q1 5.6 1 1.6 Z" stroke="#888" stroke-width="0.8" fill="none"/></svg>
<div class="a" style="left:607.3px;top:23.3px;width:7.5px;height:7.5px;border-radius:50%;background:radial-gradient(circle at 50% 38%,#ddd 0 1.3px,#6a6a6a 1.5px)"></div>
<svg class="a" width="8" height="8" viewBox="0 0 8 8" style="left:623px;top:23px;overflow:visible"><path d="M1 3.5 L4 1 L7 3.5 V7.3 H1 Z" stroke="#777" stroke-width="0.8" fill="none"/></svg>
<div class="a" style="left:639.5px;top:24.5px;width:5.5px;height:0.7px;background:#888;"></div>
<div class="a" style="left:639.5px;top:26.1px;width:5.5px;height:0.7px;background:#888;"></div>
<div class="a" style="left:639.5px;top:27.7px;width:5.5px;height:0.7px;background:#888;"></div>
</div>
</body></html>
